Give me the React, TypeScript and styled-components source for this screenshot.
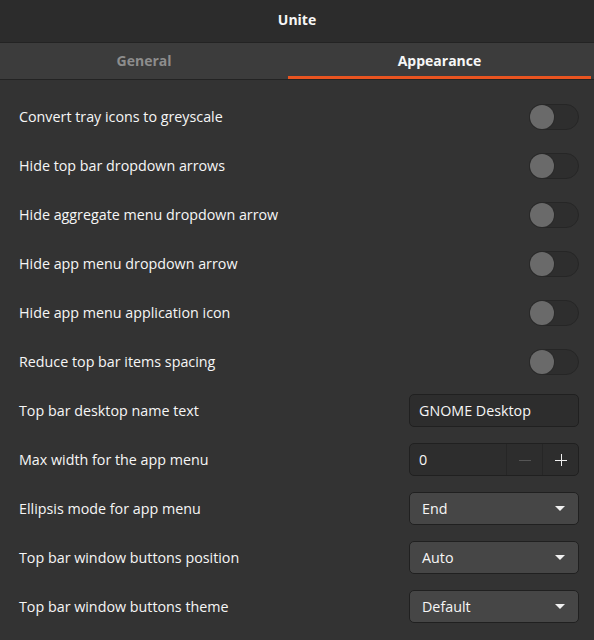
import styled, { createGlobalStyle } from "styled-components";

const GlobalStyle = createGlobalStyle`
  body {
    margin: 0;
    background: #333333;
    font-family: "Open Sans", "Noto Sans", sans-serif;
    color: #f6f6f6;
  }
`;

const Window = styled.div`
  width: 594px;
  height: 640px;
  display: flex;
  flex-direction: column;
  background: #333333;
  overflow: hidden;
`;

const HeaderBar = styled.header`
  height: 43px;
  box-sizing: border-box;
  padding-bottom: 4px;
  display: flex;
  align-items: center;
  justify-content: center;
  background: #2c2c2c;
  border-bottom: 1px solid #232323;
`;

const Title = styled.h1`
  margin: 0;
  font-size: 14px;
  font-weight: 700;
  color: #f6f6f6;
`;

const TabBar = styled.nav`
  height: 36px;
  display: grid;
  grid-template-columns: 288px 303px;
  background: #3c3c3c;
  border-bottom: 1px solid #232323;
`;

const Tab = styled.div<{ $active?: boolean }>`
  display: flex;
  align-items: center;
  justify-content: center;
  padding-bottom: 1px;
  font-size: 14px;
  font-weight: 700;
  color: ${(p) => (p.$active ? "#f6f6f6" : "#8d8d8d")};
  box-shadow: ${(p) => (p.$active ? "inset 0 -3px 0 #e95420" : "none")};
`;

const Settings = styled.ul`
  list-style: none;
  margin: 0;
  padding: 12px 15px 0 19px;
  display: flex;
  flex-direction: column;
`;

const Row = styled.li`
  height: 49px;
  display: flex;
  align-items: center;
  justify-content: space-between;
`;

const Label = styled.span`
  font-size: 14.3px;
  color: #f6f6f6;
`;

const Switch = styled.div`
  width: 48px;
  height: 24px;
  border-radius: 13px;
  border: 1px solid #262626;
  background: #2e2e2e;
  display: flex;
  align-items: center;
`;

const Knob = styled.div`
  width: 24px;
  height: 24px;
  border-radius: 50%;
  background: #6a6a6a;
  box-shadow: 0 0 0 1px #2a2a2a;
`;

const Field = styled.div<{ $raised?: boolean }>`
  width: 168px;
  height: 31px;
  box-sizing: content-box;
  border: 1px solid #202020;
  border-radius: 5px;
  background: ${(p) => (p.$raised ? "#464646" : "#2d2d2d")};
  display: flex;
  align-items: center;
  font-size: 14.3px;
  color: #f6f6f6;
  overflow: hidden;
`;

const FieldText = styled.span`
  flex: 1;
  padding-left: 9px;
`;

const SelectText = styled.span`
  flex: 1;
  padding-left: 12px;
`;

const SpinButton = styled.div<{ $dim?: boolean }>`
  width: 35px;
  height: 100%;
  display: flex;
  align-items: center;
  justify-content: center;
  border-left: 1px solid #262626;
  color: ${(p) => (p.$dim ? "#555555" : "#f0f0f0")};
`;

const Arrow = styled.span`
  width: 0;
  height: 0;
  margin-right: 13px;
  border-left: 5px solid transparent;
  border-right: 5px solid transparent;
  border-top: 5px solid #f0f0f0;
`;

const toggles = [
  "Convert tray icons to greyscale",
  "Hide top bar dropdown arrows",
  "Hide aggregate menu dropdown arrow",
  "Hide app menu dropdown arrow",
  "Hide app menu application icon",
  "Reduce top bar items spacing",
];

const selects = [
  { label: "Ellipsis mode for app menu", value: "End" },
  { label: "Top bar window buttons position", value: "Auto" },
  { label: "Top bar window buttons theme", value: "Default" },
];

function PlusMinus({ plus }: { plus?: boolean }) {
  return (
    <svg width="12" height="12" viewBox="0 0 12 12">
      <path d="M0 6.5h12" stroke="currentColor" strokeWidth="1" />
      {plus && <path d="M6.5 0v12" stroke="currentColor" strokeWidth="1" />}
    </svg>
  );
}

export default function App() {
  return (
    <Window>
      <GlobalStyle />
      <HeaderBar>
        <Title>Unite</Title>
      </HeaderBar>
      <TabBar>
        <Tab>General</Tab>
        <Tab $active>Appearance</Tab>
      </TabBar>
      <Settings>
        {toggles.map((t) => (
          <Row key={t}>
            <Label>{t}</Label>
            <Switch>
              <Knob />
            </Switch>
          </Row>
        ))}
        <Row>
          <Label>Top bar desktop name text</Label>
          <Field>
            <FieldText>GNOME Desktop</FieldText>
          </Field>
        </Row>
        <Row>
          <Label>Max width for the app menu</Label>
          <Field>
            <FieldText>0</FieldText>
            <SpinButton $dim>
              <PlusMinus />
            </SpinButton>
            <SpinButton>
              <PlusMinus plus />
            </SpinButton>
          </Field>
        </Row>
        {selects.map((s) => (
          <Row key={s.label}>
            <Label>{s.label}</Label>
            <Field $raised>
              <SelectText>{s.value}</SelectText>
              <Arrow />
            </Field>
          </Row>
        ))}
      </Settings>
    </Window>
  );
}
